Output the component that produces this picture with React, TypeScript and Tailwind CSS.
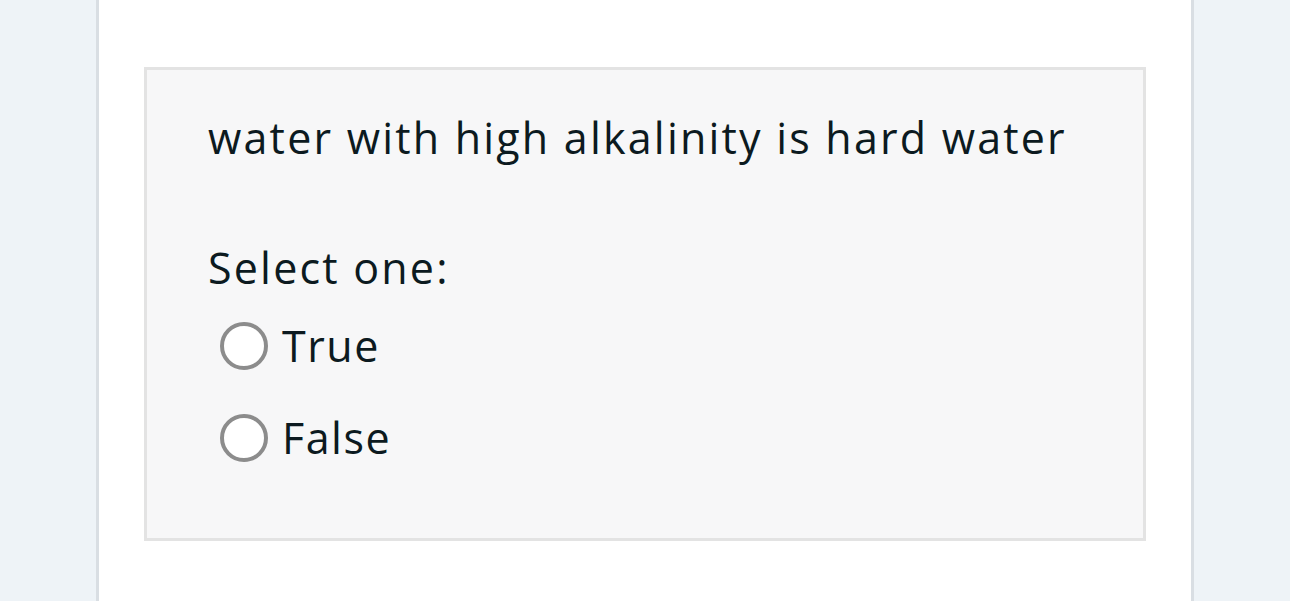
import { useState } from "react";

export default function App() {
  const [answer, setAnswer] = useState<string | null>(null);
  const options = ["True", "False"];

  return (
    <div className="min-h-screen bg-[#eef3f7] flex justify-start" style={{ fontFamily: '"Open Sans", "Liberation Sans", sans-serif' }}>
      <div className="ml-[96px] w-[1098px] min-h-[601px] bg-white border-x-[3px] border-[#d9dee3] px-[45px] pt-[67px]">
        <div className="border-[3px] border-[#e3e3e3] bg-[#f7f7f8] pl-[61px] pt-[40px] pb-[72px] text-[#0c1a20]">
          <p className="text-[43px] leading-[56px] tracking-[2.2px]">water with high alkalinity is hard water</p>
          <p className="mt-[76px] text-[43px] leading-[52px] tracking-[2.2px]">Select one:</p>
          <div className="mt-[24px] flex flex-col gap-[36px]">
            {options.map((opt) => (
              <label key={opt} className="flex items-center gap-[14px] pl-[12px] cursor-pointer">
                <span
                  onClick={() => setAnswer(opt)}
                  className="w-[48px] h-[48px] rounded-full border-[4px] border-[#8c8c8c] bg-white flex items-center justify-center"
                >
                  {answer === opt && <span className="w-[22px] h-[22px] rounded-full bg-[#0f6cbf]" />}
                </span>
                <span className="text-[43px] leading-[56px] tracking-[1.5px]">{opt}</span>
              </label>
            ))}
          </div>
        </div>
      </div>
    </div>
  );
}
